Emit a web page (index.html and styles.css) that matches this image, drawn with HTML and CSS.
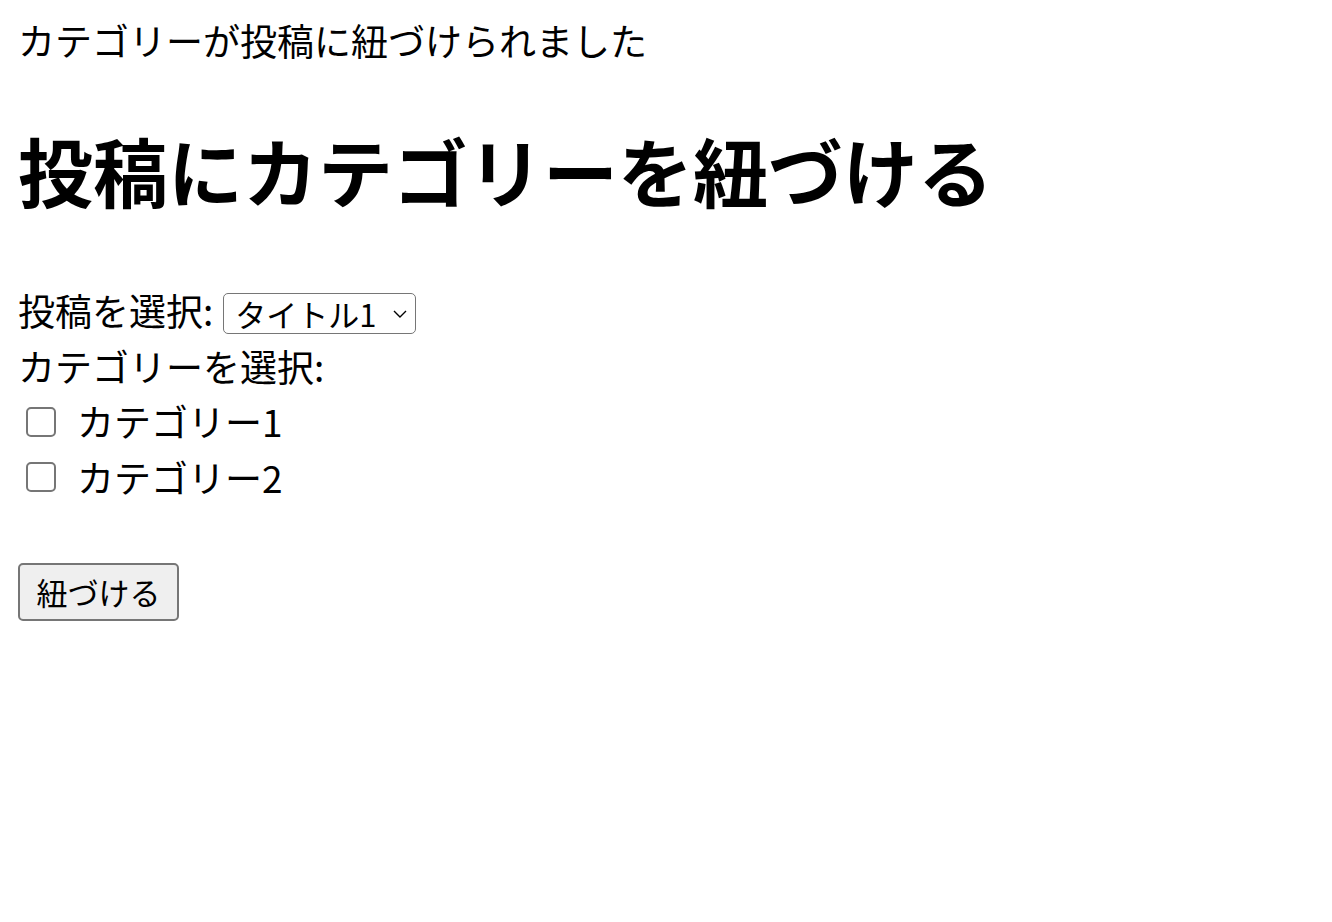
FILE: index.html
```html
<!DOCTYPE html>
<html lang="ja">
<head>
<meta charset="utf-8">
<title>投稿にカテゴリーを紐づける</title>
<link rel="stylesheet" href="styles.css">
</head>
<body>
<div class="flash">カテゴリーが投稿に紐づけられました</div>
<h1 class="title">投稿にカテゴリーを紐づける</h1>
<form class="form">
  <div class="row">
    <label class="label" for="post">投稿を選択:</label>
    <span class="select-wrap">
      <select id="post" class="select">
        <option>タイトル1</option>
        <option>タイトル2</option>
      </select>
      <svg class="chev" width="16" height="10" viewBox="0 0 16 10"><path d="M2 2 L8 8 L14 2" fill="none" stroke="#000" stroke-width="1.4"/></svg>
    </span>
  </div>
  <div class="row">カテゴリーを選択:</div>
  <label class="row check-row"><input type="checkbox" class="check"><span class="check-text">カテゴリー1</span></label>
  <label class="row check-row"><input type="checkbox" class="check"><span class="check-text">カテゴリー2</span></label>
  <div class="row spacer"></div>
  <div class="btn-row"><button type="button" class="btn">紐づける</button></div>
</form>
</body>
</html>
```
FILE: styles.css
```css
html, body {
  background: #ffffff;
}
body {
  margin: 18px;
  font-family: "Noto Sans CJK JP", "Noto Sans", sans-serif;
  font-size: 37px;
  line-height: 55.5px;
  color: #000;
}
.flash {
  line-height: 44px;
}
.title {
  font-size: 75px;
  line-height: 112px;
  font-weight: 700;
  margin: 52px 0 57px;
}
.form {
  margin: 0;
}
.row {
  display: flex;
  align-items: center;
  height: 55.5px;
}
.label {
  margin-right: 10px;
}
.select-wrap {
  position: relative;
  display: inline-flex;
  margin-top: 6px;
}
.select {
  appearance: none;
  -webkit-appearance: none;
  font-family: "Noto Sans CJK JP", "Noto Sans", sans-serif;
  font-size: 31px;
  line-height: 36px;
  height: 41px;
  width: 193px;
  padding: 0 40px 0 11px;
  border: 1.5px solid #767676;
  border-radius: 5px;
  background: #fff;
  color: #000;
}
.chev {
  position: absolute;
  right: 8px;
  top: 16px;
}
.check-row {
  gap: 0;
}
.check {
  appearance: none;
  -webkit-appearance: none;
  width: 30px;
  height: 30px;
  margin: 0 0 0 8px;
  border: 2px solid #767676;
  border-radius: 5px;
  background: #fff;
}
.check-text {
  margin-left: 21px;
}
.btn-row {
  display: flex;
  margin-top: 2px;
}
.btn {
  font-family: "Noto Sans CJK JP", "Noto Sans", sans-serif;
  font-size: 31px;
  line-height: 40px;
  height: 58px;
  width: 161px;
  padding: 0 14px;
  background: #efefef;
  color: #000;
  border: 2px solid #767676;
  border-radius: 5px;
}
```
